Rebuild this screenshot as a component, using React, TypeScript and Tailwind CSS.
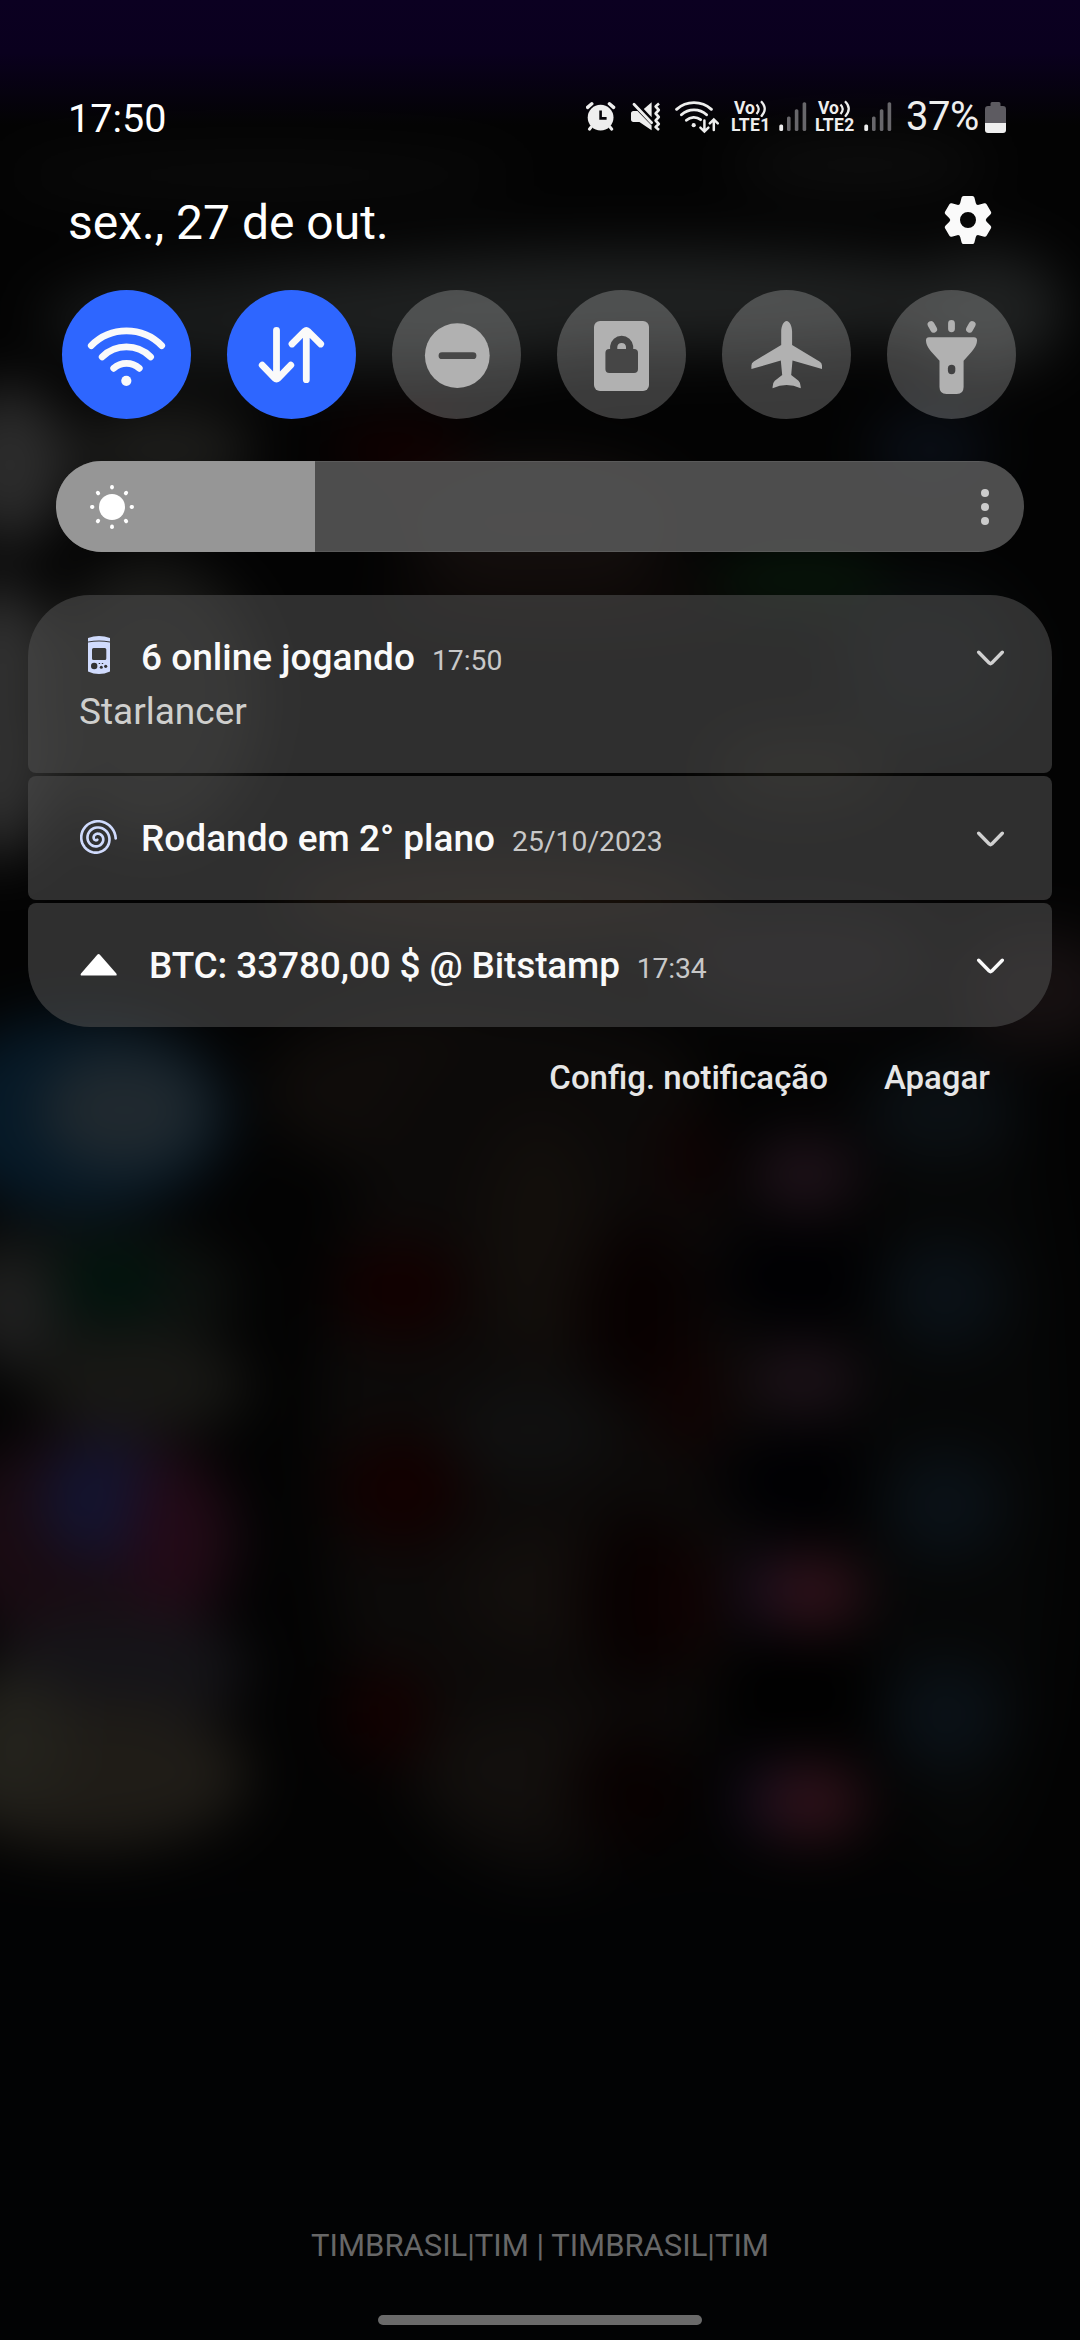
import type { ReactNode } from "react";

const blobs: [number, number, number, number, string][] = [
  [260, 175, 260, 24, "#0b0b0b"],
  [860, 165, 130, 26, "#0f0f0f"],
  [340, 320, 300, 54, "#191b1b"],
  [640, 300, 380, 50, "#1f2121"],
  [985, 310, 80, 60, "#1f2121"],
  [10, 465, 60, 80, "#2c2c2c"],
  [165, 450, 90, 45, "#1d1d1b"],
  [400, 450, 70, 30, "#120000"],
  [540, 520, 140, 60, "#140f0e"],
  [930, 450, 60, 40, "#0a0f17"],
  [560, 600, 180, 30, "#0f0a08"],
  [800, 580, 90, 30, "#07170a"],
  [0, 720, 60, 140, "#313131"],
  [150, 700, 110, 140, "#1c1c1a"],
  [930, 660, 90, 80, "#0a0e0f"],
  [800, 770, 90, 40, "#13120d"],
  [500, 900, 220, 40, "#1a110a"],
  [800, 960, 130, 50, "#120f11"],
  [1040, 990, 80, 60, "#161011"],
  [80, 1115, 150, 100, "#061927"],
  [125, 1110, 85, 60, "#20292f"],
  [80, 1290, 160, 70, "#0e110f"],
  [112, 1282, 56, 36, "#00140d"],
  [10, 1310, 45, 60, "#202020"],
  [140, 1385, 110, 50, "#181815"],
  [90, 1540, 150, 110, "#190b12"],
  [105, 1500, 65, 60, "#131430"],
  [175, 1540, 45, 90, "#230a17"],
  [120, 1670, 130, 60, "#151418"],
  [90, 1775, 160, 75, "#1f1c17"],
  [10, 1740, 60, 70, "#23221c"],
  [480, 1090, 220, 90, "#0f0c0a"],
  [540, 1440, 220, 440, "#0c0a09"],
  [400, 1290, 65, 50, "#120000"],
  [400, 1490, 65, 55, "#120000"],
  [385, 1715, 45, 50, "#120000"],
  [540, 1240, 60, 120, "#120e0b"],
  [530, 1430, 80, 50, "#101010"],
  [550, 1590, 90, 60, "#120e0c"],
  [530, 1770, 100, 60, "#120f0d"],
  [640, 1310, 60, 90, "#080101"],
  [640, 1600, 60, 90, "#080101"],
  [630, 1790, 60, 60, "#080101"],
  [690, 1160, 30, 45, "#100202"],
  [690, 1400, 30, 60, "#100202"],
  [690, 1600, 30, 60, "#100202"],
  [790, 1280, 80, 40, "#000003"],
  [790, 1480, 80, 40, "#000003"],
  [790, 1690, 80, 40, "#000000"],
  [805, 1175, 55, 38, "#1f121a"],
  [805, 1380, 55, 38, "#1d1219"],
  [770, 1590, 34, 38, "#150d20"],
  [815, 1592, 50, 38, "#31121b"],
  [770, 1800, 34, 38, "#150d20"],
  [815, 1802, 50, 38, "#31121b"],
  [960, 1450, 100, 420, "#060707"],
  [940, 1110, 80, 50, "#0b1014"],
  [945, 1295, 60, 55, "#0a1117"],
  [945, 1505, 60, 55, "#0a1117"],
  [945, 1715, 60, 55, "#0a1117"],
];

const Wallpaper = () => (
  <svg className="absolute inset-0 h-full w-full" viewBox="0 0 1080 2340">
    <defs>
      <filter id="soft" x="0" y="0" width="1080" height="2340" filterUnits="userSpaceOnUse" colorInterpolationFilters="sRGB">
        <feGaussianBlur stdDeviation="28" />
      </filter>
      <linearGradient id="sky" x1="0" y1="0" x2="0" y2="1">
        <stop offset="0" stopColor="#0b0021" />
        <stop offset="0.42" stopColor="#0a001e" />
        <stop offset="1" stopColor="#0a001e" stopOpacity="0" />
      </linearGradient>
    </defs>
    <g filter="url(#soft)">
      <rect x="-100" y="-100" width="1280" height="2540" fill="#030303" />
      <rect x="-100" y="1890" width="1280" height="560" fill="#020304" />
      {blobs.map(([cx, cy, rx, ry, fill], i) => (
        <ellipse key={i} cx={cx} cy={cy} rx={rx} ry={ry} fill={fill} />
      ))}
    </g>
    <rect width="1080" height="125" fill="url(#sky)" />
  </svg>
);

const AlarmIcon = () => (
  <svg width="30" height="30" viewBox="0 0 30 30" fill="none">
    <circle cx="14.6" cy="15.6" r="12.9" fill="#eeeeee" />
    <path d="M1.6 5.4 5.8 1.8M27.6 5.4 23.4 1.8" stroke="#eeeeee" strokeWidth="3.4" strokeLinecap="round" />
    <path d="M5.2 25 3.4 27.2M24 25l1.8 2.2" stroke="#eeeeee" strokeWidth="3" strokeLinecap="round" />
    <path d="M14.6 8.4v8h6" stroke="#050308" strokeWidth="2.6" />
  </svg>
);

const MuteIcon = () => (
  <svg width="30" height="30" viewBox="0 0 30 30" fill="none">
    <path d="M0 11.500c0-1.600.9-2.500 2.400-2.500H6.500L20.600 23.500v4.800L8.400 20H2.400C.9 20 0 19.100 0 17.500z" fill="#eeeeee" />
    <path d="M12.800 7 20.600.3v15z" fill="#eeeeee" />
    <path d="M3 2.200 20.600 20.800" stroke="#eeeeee" strokeWidth="2.800" strokeLinecap="round" />
    <path
      d="M28 1.500 24.600 4.500 27.800 8 24.600 11.500 27.800 15 24.600 18.500 27.800 22 24.600 25 28 28"
      stroke="#eeeeee"
      strokeWidth="2.600"
      strokeLinejoin="round"
    />
  </svg>
);

const StatusWifiIcon = () => (
  <svg width="46" height="34" viewBox="0 0 46 34" fill="none" stroke="#eeeeee" strokeWidth="2.900" strokeLinecap="round">
    <path d="M1.600 9.300A26 26 0 0 1 36.400 9.300" />
    <path d="M6.400 14.800A18.500 18.500 0 0 1 31.600 14.800" />
    <path d="M11.400 20.300A11 11 0 0 1 25.600 19.600" />
    <circle cx="18.700" cy="25.200" r="2.100" fill="#eeeeee" stroke="none" />
    <path d="M29.400 20.500V31M25.400 27.600l4 4 4-4" strokeWidth="2.500" />
    <path d="M38.800 30V19.600M34.800 23.400l4-4 4 4" strokeWidth="2.500" />
  </svg>
);

const VolteLabel = ({ slot }: { slot: number }) => (
  <div className="flex flex-col items-start text-[17.5px] leading-[17px] font-bold text-[#eeeeee]">
    <div className="flex items-start pl-[3px]">
      <span>Vo</span>
      <svg width="12" height="17" viewBox="0 0 12 17" fill="none" stroke="#eeeeee" strokeWidth="2.200">
        <path d="M1.500 4.500q4.500 4.500 0 9.500M6 1.200q7.500 7.500 0 15.500" />
      </svg>
    </div>
    <span className="tracking-[0.3px]">LTE{slot}</span>
  </div>
);

const SignalBars = () => (
  <svg width="28" height="30" viewBox="0 0 28 30">
    <rect x="0.300" y="22.500" width="3.800" height="6.500" rx="1.500" fill="#eeeeee" />
    <rect x="8" y="14.600" width="3.600" height="14.400" rx="1.500" fill="#68676b" />
    <rect x="15.800" y="7.300" width="3.600" height="21.700" rx="1.500" fill="#68676b" />
    <rect x="23.600" y="0.300" width="3.600" height="28.700" rx="1.500" fill="#68676b" />
  </svg>
);

const BatteryIcon = () => (
  <svg width="21" height="31" viewBox="0 0 21 31">
    <path d="M5.500 4V1.500Q5.500 0 7 0h7q1.500 0 1.500 1.500V4H18q3 0 3 3v14H0V7q0-3 3-3z" fill="#5d5b61" />
    <path d="M0 21h21v7q0 3-3 3H3q-3 0-3-3z" fill="#eeeeee" />
  </svg>
);

const StatusBar = () => (
  <header className="flex h-[193px] items-start pt-[99px] pl-[68px] pr-[74px]">
    <span className="grow text-[39.5px] leading-10 text-white">17:50</span>
    <div className="mt-[3px] flex items-start">
      <AlarmIcon />
      <div className="ml-[15px]">
        <MuteIcon />
      </div>
      <div className="-mt-[2px] ml-[14px]">
        <StatusWifiIcon />
      </div>
      <div className="-mt-[2px] ml-[10px] w-[48px]">
        <VolteLabel slot={1} />
      </div>
      <SignalBars />
      <div className="-mt-[2px] ml-[8px] w-[49px]">
        <VolteLabel slot={2} />
      </div>
      <SignalBars />
      <span className="-mt-[5px] ml-[14px] w-[79px] text-[40px] leading-10 tracking-[-0.5px] text-[#eeeeee]">37%</span>
      <BatteryIcon />
    </div>
  </header>
);

const gearPath = () => {
  const turn = (x: number, y: number, a: number) => {
    const c = Math.cos(a);
    const s = Math.sin(a);
    return `${(x * c - y * s).toFixed(2)} ${(x * s + y * c).toFixed(2)}`;
  };
  let d = "";
  for (let i = 0; i < 6; i++) {
    const a = (i * Math.PI) / 3;
    d += `${i ? "L" : "M"}${turn(-7.8, -17, a)}L${turn(-6.4, -22.4, a)}Q${turn(-6, -24, a)} ${turn(-4.4, -24, a)}`;
    d += `L${turn(4.4, -24, a)}Q${turn(6, -24, a)} ${turn(6.4, -22.4, a)}L${turn(7.8, -17, a)}`;
    d += `Q${turn(8.4, -14.6, a)} ${turn(-7.8, -17, a + Math.PI / 3)}`;
  }
  return d + "ZM8 0A8 8 0 1 0-8 0A8 8 0 1 0 8 0Z";
};

const DateRow = () => (
  <div className="flex h-[60px] items-start justify-between pl-[68px] pr-[88px]">
    <span className="text-[48px] leading-[60px] text-white">sex., 27 de out.</span>
    <svg className="mt-[3px]" width="48" height="48" viewBox="-24 -24 48 48">
      <path d={gearPath()} fill="#fafafa" fillRule="evenodd" />
    </svg>
  </div>
);

const Tile = ({ active, children }: { active?: boolean; children: ReactNode }) => (
  <button className={`size-[129px] rounded-full ${active ? "bg-[#2e66ff]" : "bg-white/22"}`}>
    <svg width="129" height="129" viewBox="0 0 129 129" fill="none">
      {children}
    </svg>
  </button>
);

const QuickTiles = () => (
  <div className="mt-[37px] flex gap-9 pl-[62px]">
    <Tile active>
      <g stroke="#fafafa" strokeWidth="6.800" strokeLinecap="round">
        <path d="M29.300 55.600A49.500 49.500 0 0 1 99.700 55.600" />
        <path d="M40.200 66.800A34.500 34.500 0 0 1 88.600 66.800" />
        <path d="M51.700 78.300A19 19 0 0 1 77.300 78.300" />
      </g>
      <circle cx="64.300" cy="90.800" r="5.100" fill="#fafafa" />
    </Tile>
    <Tile active>
      <g stroke="#fafafa" strokeWidth="6.800" strokeLinecap="round" strokeLinejoin="round">
        <path d="M49.500 40.300V88.500M35.200 75.200 48 88.300Q49.500 89.800 51 88.300L63.800 75.200" />
        <path d="M79.300 89.700V41.500M65 54 77.800 41.200Q79.300 39.800 80.800 41.200L93.700 54" />
      </g>
    </Tile>
    <Tile>
      <circle cx="65.300" cy="65.600" r="32.400" fill="#b1b1b1" />
      <path d="M50 65.700H81" stroke="#484848" strokeWidth="6.800" strokeLinecap="round" />
    </Tile>
    <Tile>
      <rect x="37" y="31" width="55" height="70" rx="6" fill="#b1b1b1" />
      <rect x="48.400" y="59" width="32.600" height="24" rx="4" fill="#464646" />
      <path d="M56.700 61V56.500a8 8 0 0 1 15.900 0V61" stroke="#464646" strokeWidth="7.200" />
    </Tile>
    <Tile>
      <path
        d="M64.600 31C67.600 31 70.100 36 70.100 42V55L97.500 71.500Q100 73.200 100 75.500V79L70.500 70.600 69.200 85 76.500 90.800Q79 93 78.700 98.200 71.500 95.200 64.600 95.100 57.700 95.200 50.600 98.200 50.300 93 52.800 90.800L60.200 85 58.800 70.600 29.400 79V75.500Q29.400 73.200 31.800 71.500L59.200 55V42C59.200 36 61.600 31 64.600 31Z"
        fill="#b1b1b1"
      />
    </Tile>
    <Tile>
      <path d="M64.500 33.500V38.800M44 34.500 46.700 39.200M85.200 34.500 82.500 39.200" stroke="#b1b1b1" strokeWidth="6.800" strokeLinecap="round" />
      <path
        d="M42 47.300H87Q90 47.300 90 50.300C90 55 87.500 58.500 84 62.500L76.600 70.800V97Q76.600 104 69.800 104H59.500Q52.500 104 52.500 97V70.800L45 62.500C41.500 58.500 39 55 39 50.300Q39 47.300 42 47.300Z"
        fill="#b1b1b1"
      />
      <rect x="60.900" y="74.800" width="7.400" height="9.400" rx="3.700" fill="#414142" />
    </Tile>
  </div>
);

const BrightnessSlider = () => (
  <div className="mx-14 mt-[42px] flex h-[91px] overflow-hidden rounded-full bg-[#555555]/90">
    <div className="flex w-[259px] items-center bg-[#969696] pl-[33px]">
      <svg width="46" height="46" viewBox="-23 -23 46 46">
        <circle r="13" fill="white" />
        {[0, 45, 90, 135, 180, 225, 270, 315].map((a) => (
          <rect key={a} x="-1.900" y="-22" width="3.800" height="4.400" rx="1.800" fill="white" transform={`rotate(${a})`} />
        ))}
      </svg>
    </div>
    <div className="flex grow flex-col items-end justify-center gap-[6px] border-y border-white/8 pr-[35px]">
      <span className="size-[8px] rounded-full bg-[#cccccc]" />
      <span className="size-[8px] rounded-full bg-[#cccccc]" />
      <span className="size-[8px] rounded-full bg-[#cccccc]" />
    </div>
  </div>
);

const HandheldIcon = () => (
  <svg className="-mt-1" width="38" height="40" viewBox="0 0 38 40">
    <path d="M8 3Q19-.8 30 3V6.400Q19 4.400 8 6.400Z" fill="#d0dbfd" />
    <path
      d="M8 7.600Q19 5.600 30 7.600V36.500Q19 41.500 8 36.500ZM13.500 13Q12 13 12 14.500V23.500Q12 25 13.500 25H24.800Q26.300 25 26.300 23.500V14.500Q26.300 13 24.800 13Z"
      fill="#d0dbfd"
      fillRule="evenodd"
    />
    <circle cx="14.200" cy="31" r="3.200" fill="#323232" />
    <circle cx="21.300" cy="32.300" r="1.500" fill="#323232" />
    <circle cx="25.700" cy="31.300" r="1.600" fill="#323232" />
    <path d="M18.700 28.500h1.400M21.800 28.500h1.400" stroke="#323232" strokeWidth="1.200" />
  </svg>
);

const spiralPoints = Array.from({ length: 113 }, (_, i) => {
  const turns = 0.2 + (i / 112) * 2.8;
  const a = turns * Math.PI * 2;
  const r = turns * 6.6;
  return `${(17.8 + r * Math.cos(a)).toFixed(2)},${(19.5 + r * Math.sin(a)).toFixed(2)}`;
}).join(" ");

const SpiralIcon = () => (
  <svg width="40" height="38" viewBox="0 0 40 38">
    <polyline points={spiralPoints} fill="none" stroke="#d0dbfd" strokeWidth="2.800" strokeLinecap="round" />
  </svg>
);

const UpIcon = () => (
  <svg width="38" height="24" viewBox="0 0 38 24">
    <path d="M17.300 1.700Q18.600.4 19.900 1.700L36.300 20.500Q37.500 22.500 35.300 22.500H2Q-.2 22.500 1 20.500Z" fill="white" />
  </svg>
);

const Chevron = ({ color }: { color: string }) => (
  <svg className="mt-px" width="28" height="16" viewBox="0 0 28 16" fill="none" stroke={color} strokeWidth="3.400" strokeLinecap="round">
    <path d="M2.700 2.300 13.200 13Q14.500 14.200 15.800 13L26.300 2.300" strokeLinejoin="round" />
  </svg>
);

type NotificationProps = {
  icon: ReactNode;
  title: string;
  time: string;
  body?: string;
  shape: string;
  titleClass?: string;
  chevron?: string;
};

const Notification = ({ icon, title, time, body, shape, titleClass = "pl-[23px]", chevron = "#d0d0d0" }: NotificationProps) => (
  <article className={`bg-[#4d4d4d]/60 pt-10 pl-[52px] pr-12 ${shape}`}>
    <div className="flex h-11 items-center">
      <div className="flex h-11 w-[38px] items-center">{icon}</div>
      <div className={`flex grow items-baseline pt-1 ${titleClass}`}>
        <h2 className="text-[37px] leading-[46px] font-medium text-[#fafafa]">{title}</h2>
        <span className="ml-[17px] text-[28.3px] text-[#c8c8c8]">{time}</span>
      </div>
      <Chevron color={chevron} />
    </div>
    {body && <p className="-ml-px mt-[11px] text-[37px] leading-11 text-[#cfcfcd]">{body}</p>}
  </article>
);

const NotificationList = () => (
  <section className="mx-7 mt-[43px] flex flex-col gap-[3px]">
    <Notification
      icon={<HandheldIcon />}
      title="6 online jogando"
      time="17:50"
      body="Starlancer"
      shape="h-[178px] rounded-t-[62px] rounded-b-lg"
    />
    <Notification icon={<SpiralIcon />} title="Rodando em 2° plano" time="25/10/2023" shape="h-[124px] rounded-lg" />
    <Notification
      icon={<UpIcon />}
      title="BTC: 33780,00 $ @ Bitstamp"
      time="17:34"
      shape="h-[124px] rounded-t-lg rounded-b-[62px]"
      titleClass="pl-[31px] tracking-[-0.15px]"
      chevron="#fafafa"
    />
  </section>
);

export default function App() {
  return (
    <main className="relative h-[2340px] w-[1080px] overflow-hidden bg-black font-[Roboto,sans-serif]">
      <Wallpaper />
      <div className="relative flex h-full flex-col">
        <StatusBar />
        <DateRow />
        <QuickTiles />
        <BrightnessSlider />
        <NotificationList />
        <div className="mt-[29px] flex justify-end gap-[56px] pr-[90px] text-[33px] leading-11 font-medium text-[#e6e6e6]">
          <button>Config. notificação</button>
          <button>Apagar</button>
        </div>
        <footer className="mt-auto flex flex-col items-center">
          <p className="text-[31px] leading-10 text-[#676767]">TIMBRASIL|TIM | TIMBRASIL|TIM</p>
          <div className="mt-[49px] mb-[15px] h-[10px] w-[324px] rounded-full bg-[#6a6a6a]" />
        </footer>
      </div>
    </main>
  );
}
